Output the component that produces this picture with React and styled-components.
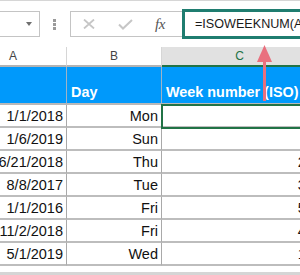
import styled, { createGlobalStyle } from "styled-components";

const GlobalStyle = createGlobalStyle`
  html, body {
    margin: 0;
    padding: 0;
    background: #fff;
  }
  body {
    font-family: "Liberation Sans", Arial, sans-serif;
    overflow: hidden;
  }
`;

const Sheet = styled.div`
  position: relative;
  width: 300px;
  height: 275px;
  overflow: hidden;
  background: #fff;
`;

const Toolbar = styled.div`
  height: 46px;
  border-top: 1px solid #d6d6d6;
  display: flex;
  align-items: flex-start;
`;

const NameBox = styled.div`
  margin-top: 10px;
  margin-left: -20px;
  width: 58px;
  height: 24px;
  flex-shrink: 0;
  border: 1px solid #c4c4c4;
  display: flex;
  align-items: center;
  justify-content: flex-end;
`;

const DropArrow = styled.span`
  width: 0;
  height: 0;
  margin-right: 7px;
  border-left: 3.5px solid transparent;
  border-right: 3.5px solid transparent;
  border-top: 4px solid #6f6f6f;
`;

const Dots = styled.div`
  margin: 18px 14px 0 13px;
  width: 3px;
  flex-shrink: 0;
  display: flex;
  flex-direction: column;
  gap: 1.5px;
  span {
    width: 2.5px;
    height: 2.5px;
    background: #9a9a9a;
  }
`;

const ActionBox = styled.div`
  margin-top: 10px;
  width: 99px;
  height: 24px;
  flex-shrink: 0;
  border: 1px solid #c4c4c4;
  display: flex;
  align-items: center;
  padding-left: 12px;
`;

const IconSlot = styled.span`
  display: flex;
  align-items: center;
  margin-right: ${(p) => p.$gap}px;
`;

const Fx = styled.span`
  font-family: "Liberation Serif", "Times New Roman", serif;
  font-style: italic;
  font-size: 15px;
  color: #555;
  letter-spacing: -0.5px;
`;

const FormulaBox = styled.div`
  margin-top: 8px;
  margin-left: -1px;
  width: 140px;
  height: 24px;
  flex-shrink: 0;
  border: 3px solid #1f7d70;
  background: #fff;
  display: flex;
  align-items: center;
  padding-left: 10px;
  font-size: 12.6px;
  color: #1a1a1a;
  white-space: nowrap;
  overflow: hidden;
`;

const Row = styled.div`
  margin-left: -40px;
  display: grid;
  grid-template-columns: 107px 95px 156px;
  width: 358px;
`;

const ColHead = styled.div`
  height: 18px;
  display: flex;
  align-items: center;
  justify-content: center;
  font-size: 12px;
  color: ${(p) => (p.$active ? "#217346" : "#444")};
  background: ${(p) => (p.$active ? "#e1e1e1" : "#fff")};
  border-bottom: 2px solid ${(p) => (p.$active ? "#217346" : "#b3b3b3")};
  border-right: 1px solid #d6d6d6;
`;

const HeadCell = styled.div`
  height: 38px;
  background: #0099fb;
  color: #fff;
  font-weight: bold;
  font-size: 14.4px;
  white-space: nowrap;
  display: flex;
  align-items: flex-end;
  padding: 0 0 3px 4px;
  box-sizing: border-box;
  border-right: 1px solid #9fb3c6;
  border-bottom: 2px solid #b8b8b8;
`;

const Cell = styled.div`
  position: relative;
  height: 23px;
  box-sizing: border-box;
  display: flex;
  align-items: center;
  justify-content: flex-end;
  padding-right: 3px;
  font-size: 14.5px;
  color: #111;
  white-space: nowrap;
  border-right: 1px solid #a9a9a9;
  border-bottom: 2px solid #bdbdbd;
  ${(p) =>
    p.$selected &&
    `
    z-index: 1;
    outline: 2px solid #217346;
    outline-offset: -1px;
  `}
`;

const Footer = styled.div`
  margin-top: 6px;
  height: 10px;
  background: #d5d5d5;
`;

const Pointer = styled.svg`
  position: absolute;
  left: 255px;
  top: 44px;
  z-index: 2;
`;

const rows = [
  ["1/1/2018", "Mon", ""],
  ["1/6/2019", "Sun", "1"],
  ["6/21/2018", "Thu", "25"],
  ["8/8/2017", "Tue", "32"],
  ["1/1/2016", "Fri", "53"],
  ["11/2/2018", "Fri", "44"],
  ["5/1/2019", "Wed", "18"],
];

const App = () => {
  return (
    <Sheet>
      <GlobalStyle />
      <Toolbar>
        <NameBox>
          <DropArrow />
        </NameBox>
        <Dots>
          <span />
          <span />
          <span />
        </Dots>
        <ActionBox>
          <IconSlot $gap={23}>
            <svg width="12" height="10" viewBox="0 0 12 10">
              <path d="M1 0.5 L11 9.5 M11 0.5 L1 9.5" stroke="#c6c6c6" strokeWidth="1.8" fill="none" />
            </svg>
          </IconSlot>
          <IconSlot $gap={22}>
            <svg width="15" height="11" viewBox="0 0 15 11">
              <path d="M1 5.5 L5 9.5 L14 1" stroke="#c6c6c6" strokeWidth="2" fill="none" />
            </svg>
          </IconSlot>
          <Fx>fx</Fx>
        </ActionBox>
        <FormulaBox>=ISOWEEKNUM(A2)</FormulaBox>
      </Toolbar>

      <Row>
        <ColHead>A</ColHead>
        <ColHead>B</ColHead>
        <ColHead $active>C</ColHead>
      </Row>
      <Row>
        <HeadCell />
        <HeadCell>Day</HeadCell>
        <HeadCell>Week number (ISO)</HeadCell>
      </Row>
      {rows.map((r, i) => (
        <Row key={i}>
          <Cell>{r[0]}</Cell>
          <Cell>{r[1]}</Cell>
          <Cell $selected={i === 0}>{r[2]}</Cell>
        </Row>
      ))}
      <Footer />

      <Pointer width="19" height="58" viewBox="0 0 19 58">
        <path d="M9.5 14 L9.5 57" stroke="#e9707e" strokeWidth="3" />
        <path d="M9.5 1 L2 18 L17 18 Z" fill="#e9707e" />
      </Pointer>
    </Sheet>
  );
};

export default App;
